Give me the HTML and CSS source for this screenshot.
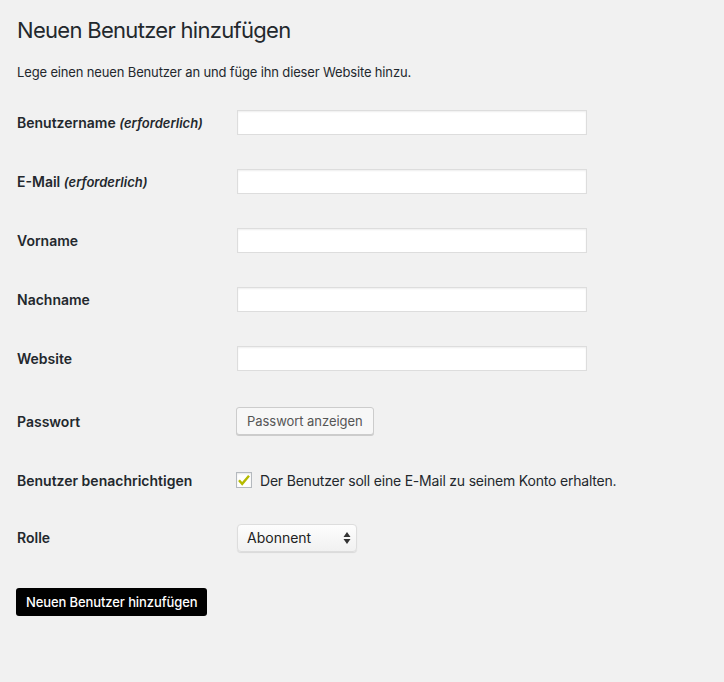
FILE: index.html
```html
<!DOCTYPE html>
<html>

<head>
    <meta charset="utf-8">
    <title>Neuen Benutzer hinzufügen</title>
    <meta name="viewport" content="width=device-width, initial-scale=1.0">
    <link rel="stylesheet" href="styles.css">
</head>

<body>
    <div class="wrap">
        <h1 class="title">Neuen Benutzer hinzufügen</h1>
        <p class="intro">Lege einen neuen Benutzer an und füge ihn dieser Website hinzu.</p>

        <form class="user-form">
            <div class="form-table">
                <div class="row">
                    <label class="label">Benutzername <em>(erforderlich)</em></label>
                    <div class="field"><input type="text" class="text-input"></div>
                </div>
                <div class="row">
                    <label class="label">E-Mail <em>(erforderlich)</em></label>
                    <div class="field"><input type="email" class="text-input"></div>
                </div>
                <div class="row">
                    <label class="label">Vorname</label>
                    <div class="field"><input type="text" class="text-input"></div>
                </div>
                <div class="row">
                    <label class="label">Nachname</label>
                    <div class="field"><input type="text" class="text-input"></div>
                </div>
                <div class="row">
                    <label class="label">Website</label>
                    <div class="field"><input type="text" class="text-input"></div>
                </div>
                <div class="row row-password">
                    <label class="label">Passwort</label>
                    <div class="field"><button type="button" class="button">Passwort anzeigen</button></div>
                </div>
                <div class="row row-notify">
                    <label class="label">Benutzer benachrichtigen</label>
                    <div class="field">
                        <label class="check">
                            <span class="checkbox">
                                <svg width="14" height="14" viewBox="0 0 14 14">
                                    <path d="M2 7.2 L5.2 10.8 L12 2.8" fill="none" stroke="#b5ba00" stroke-width="2.4" stroke-linejoin="miter"/>
                                </svg>
                            </span>
                            Der Benutzer soll eine E-Mail zu seinem Konto erhalten.
                        </label>
                    </div>
                </div>
                <div class="row row-role">
                    <label class="label">Rolle</label>
                    <div class="field">
                        <div class="select">
                            <span>Abonnent</span>
                            <svg width="8" height="14" viewBox="0 0 8 14">
                                <path d="M4 1 L7.5 6 L0.5 6 Z M4 13 L7.5 8 L0.5 8 Z" fill="#333"/>
                            </svg>
                        </div>
                    </div>
                </div>
            </div>
            <button type="submit" class="button-primary">Neuen Benutzer hinzufügen</button>
        </form>
    </div>
</body>

</html>
```

FILE: styles.css
```css
* {
    margin: 0;
    padding: 0;
    box-sizing: border-box;
}

body {
    background-color: #f1f1f1;
    color: #23282d;
    font-family: Inter, Roboto, "Liberation Sans", sans-serif;
    font-size: 13px;
}

.wrap {
    padding: 0 16px 0 17px;
}

.title {
    font-size: 22px;
    font-weight: 400;
    line-height: 29px;
    padding-top: 16px;
    letter-spacing: -0.7px;
}

.intro {
    font-size: 13px;
    line-height: 18px;
    margin-top: 18px;
    letter-spacing: -0.15px;
}

.form-table {
    margin-top: 12px;
}

.row {
    display: flex;
    align-items: center;
    height: 59px;
}

.row-password {
    height: 66px;
}

.row-notify {
    height: 52px;
}

.row-role {
    height: 63px;
}

.label {
    width: 220px;
    font-size: 14px;
    font-weight: 600;
}

.label em {
    font-size: 13px;
}

.text-input {
    width: 350px;
    height: 25px;
    background: #fff;
    border: 1px solid #ddd;
    box-shadow: inset 0 1px 2px rgba(0, 0, 0, 0.07);
    outline: none;
}

.button {
    height: 28px;
    padding: 0 10px;
    margin-left: -1px;
    background: #f7f7f7;
    border: 1px solid #ccc;
    border-radius: 3px;
    box-shadow: 0 1px 0 #ccc;
    color: #555;
    font-family: inherit;
    font-size: 13px;
    letter-spacing: -0.05px;
    cursor: pointer;
}

.check {
    display: flex;
    align-items: center;
    gap: 8px;
    font-size: 14px;
    margin-left: -1px;
    letter-spacing: -0.2px;
}

.checkbox {
    width: 16px;
    height: 16px;
    background: #fff;
    border: 1px solid #b4b9be;
    box-shadow: inset 0 1px 2px rgba(0, 0, 0, 0.1);
    display: flex;
    align-items: center;
    justify-content: center;
}

.select {
    width: 120px;
    height: 28px;
    display: flex;
    align-items: center;
    justify-content: space-between;
    padding: 0 5px 0 9px;
    background: linear-gradient(#fdfdfd, #f1f1f1);
    border: 1px solid #ddd;
    border-radius: 4px;
    box-shadow: 0 1px 1px rgba(0, 0, 0, 0.1);
    font-size: 14px;
    color: #222;
}

.button-primary {
    margin-top: 19px;
    margin-left: -1px;
    height: 28px;
    padding: 0 10px;
    background: #000;
    color: #fff;
    border: none;
    border-radius: 3px;
    font-family: inherit;
    font-size: 13px;
    font-weight: 500;
    letter-spacing: -0.1px;
    cursor: pointer;
}
```
